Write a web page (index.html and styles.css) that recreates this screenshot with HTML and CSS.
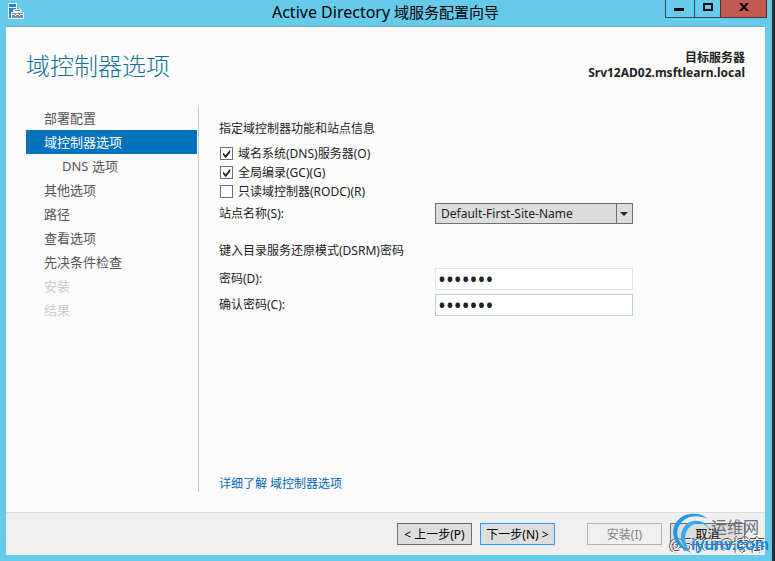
FILE: index.html
```html
<!DOCTYPE html>
<html lang="zh-CN">
<head>
  <meta charset="UTF-8" />
  <title>Active Directory 域服务配置向导</title>
  <link rel="stylesheet" href="styles.css">
</head>
<body>
  <div class="window">
    <header class="titlebar">
      <svg class="app-icon" width="16" height="16" viewBox="0 0 16 16">
        <path d="M0 0h9v7H4v9H0z" fill="#fff" />
        <path d="M1 1h7v3H1zM1 5h7v1H6L3 10v5H1z" fill="#1f86dc" />
        <path d="M3 9.500h2.500V7q0-1 1-1h6q1 0 1 1v2.500H16V16H3z" fill="#fff" />
        <path d="M4 10h11v1h-3v1h-1v-1H8v1H7v-1H4zM4 12h3v1h1v-1h3v1h1v-1h3v3H4zM7 7h5v1H7z" fill="#7890a4" />
      </svg>
      <div class="title"><span>Active Directory</span> 域服务配置向导</div>
      <div class="controls">
        <button class="min" aria-label="最小化"><svg width="28" height="17"><path d="M8 8h10v3H8z" /></svg></button>
        <button class="max" aria-label="最大化"><svg width="25" height="17"><path d="M8 3h10v8H8zM10 5v4h6V5z" fill-rule="evenodd" /></svg></button>
        <button class="close" aria-label="关闭"><svg width="45" height="17"><path d="M18 3h3l2 2.500L25 3h3l-3.500 4L28 11h-3l-2-2.500L21 11h-3l3.500-4z" /></svg></button>
      </div>
    </header>

    <div class="panel">
      <div class="header">
        <h1>域控制器选项</h1>
        <div class="target">目标服务器<br>Srv12AD02.msftlearn.local</div>
      </div>

      <div class="content">
        <nav class="steps">
          <a href="#">部署配置</a>
          <a href="#" class="active">域控制器选项</a>
          <a href="#" class="sub">DNS 选项</a>
          <a href="#">其他选项</a>
          <a href="#">路径</a>
          <a href="#">查看选项</a>
          <a href="#">先决条件检查</a>
          <a class="disabled">安装</a>
          <a class="disabled">结果</a>
        </nav>

        <form class="options">
          <p class="caption">指定域控制器功能和站点信息</p>
          <div class="checks">
            <label><input type="checkbox" checked />域名系统(DNS)服务器(O)</label>
            <label><input type="checkbox" checked />全局编录(GC)(G)</label>
            <label><input type="checkbox" />只读域控制器(RODC)(R)</label>
          </div>
          <div class="row">
            <label for="site">站点名称(S):</label>
            <div class="select">
              <select id="site"><option>Default-First-Site-Name</option></select>
            </div>
          </div>

          <p class="caption dsrm">键入目录服务还原模式(DSRM)密码</p>
          <div class="passwords">
            <div class="row">
              <label for="pwd">密码(D):</label>
              <input type="password" id="pwd" value="1234567" />
            </div>
            <div class="row">
              <label for="pwd2">确认密码(C):</label>
              <input type="password" id="pwd2" class="current" value="1234567" />
            </div>
          </div>

          <a href="#" class="more">详细了解 域控制器选项</a>
        </form>
      </div>

      <footer class="footer">
        <div class="group">
          <button>&lt; 上一步(P)</button>
          <button class="default">下一步(N) &gt;</button>
        </div>
        <div class="group">
          <button disabled>安装(I)</button>
          <button>取消</button>
        </div>
      </footer>
    </div>
  </div>

  <div class="watermark">
    <span class="cto">@51CTO博客</span>
    <svg width="44" height="42" viewBox="0 0 44 42">
      <path d="M36 6C28-1 14-1 6 7-3 17 0 34 20 40 8 33 1 22 8 11 14 3 25 1 36 6z" fill="#1b9be8" />
      <path d="M37 15C32 6 18 5 12 14c-6 9-3 20 6 25-5-8-7-16-2-23 5-7 14-8 21-1z" fill="#38a8ee" />
    </svg>
    <span class="name">运维网</span>
    <span class="site">iyunv.com</span>
  </div>
</body>
</html>
```
FILE: styles.css
```css
* {
  box-sizing: border-box;
}

body {
  margin: 0;
  padding-right: 3px;
  background: #2d2d2d;
  color: #222;
  font-family: "Noto Sans", "Noto Sans CJK SC", sans-serif;
  font-size: 12px;
  line-height: 20px;
}

button, input, select {
  font: inherit;
  color: inherit;
  margin: 0;
}

a {
  color: inherit;
  text-decoration: none;
}

.window {
  display: flex;
  flex-direction: column;
  min-height: 100vh;
  padding: 0 7px 6px 6px;
  background: #66caea;
}

/* title bar */
.titlebar {
  display: grid;
  grid-template-columns: 1fr auto 1fr;
  height: 26px;
}

.app-icon {
  margin: 3px 2px;
}

.title {
  color: #000;
  font-size: 15px;
  line-height: 24px;
}

.title span {
  font-size: 16px;
}

.controls {
  display: flex;
  justify-self: end;
  height: 18px;
  margin-right: -2px;
}

.controls button {
  display: flex;
  padding: 0;
  border: 1px solid #2c4a58;
  border-width: 0 0 1px 1px;
  background: none;
}

.controls .close {
  border-right-width: 1px;
  border-color: #5d2c28;
  background: #c45b51;
}

/* panel */
.panel {
  flex: 1;
  display: flex;
  flex-direction: column;
  border-top: 1px solid #6fa9c4;
  background: #fcfcfc;
}

.header {
  display: flex;
  justify-content: space-between;
  height: 79px;
  padding: 20px 20px 0;
}

h1 {
  margin: 0;
  color: #0f6f94;
  font-size: 24px;
  font-weight: 300;
  line-height: 38px;
}

.target {
  padding-top: 3px;
  font-weight: bold;
  line-height: 15px;
  text-align: right;
}

.content {
  flex: 1;
  display: flex;
  margin-bottom: 20px;
  padding: 0 20px;
}

.steps {
  width: 173px;
  padding-right: 1px;
  border-right: 1px solid #c8c8c8;
  color: #555;
  font-size: 13px;
  line-height: 24px;
}

.steps a {
  display: block;
  padding-left: 18px;
}

.steps .active {
  background: #0072bc;
  color: #fff;
}

.steps .sub {
  padding-left: 36px;
}

.steps .disabled {
  color: #ccc;
}

.options {
  flex: 1;
  display: flex;
  flex-direction: column;
  padding: 13px 0 0 20px;
}

.caption {
  margin: 0;
}

.checks {
  margin: 5px 0 2px;
}

.checks label {
  display: flex;
  align-items: center;
  gap: 5px;
  height: 19px;
  padding-left: 1px;
}

input[type="checkbox"] {
  appearance: none;
  width: 13px;
  height: 13px;
  border: 1px solid #707070;
  background: #fff;
}

input[type="checkbox"]:checked::before {
  content: "";
  display: block;
  height: 11px;
  background: #222;
  clip-path: polygon(18% 42%, 42% 66%, 84% 14%, 84% 40%, 46% 88%, 38% 88%, 18% 62%);
}

.row {
  display: grid;
  grid-template-columns: 216px 198px;
  align-items: center;
}

.select {
  position: relative;
}

.select select {
  display: block;
  appearance: none;
  width: 100%;
  height: 21px;
  padding: 0 20px 0 5px;
  border: 1px solid #707070;
  border-radius: 0;
  background: #ddd;
  line-height: 19px;
}

.select::before {
  content: "";
  position: absolute;
  top: 0;
  bottom: 0;
  right: 16px;
  border-left: 1px solid #707070;
}

.select::after {
  content: "";
  position: absolute;
  top: 9px;
  right: 5px;
  border: 4px solid transparent;
  border-top-color: #222;
  border-bottom: 0;
  pointer-events: none;
}

.dsrm {
  margin: 17px 0 7px;
}

.passwords {
  display: grid;
  gap: 4px;
}

.passwords input {
  height: 22px;
  padding: 0 2px;
  border: 1px solid #e0e2ec;
  background: #fff;
  font-size: 21px;
  line-height: 20px;
}

.passwords .current {
  border-color: #b4d0e4;
}

.more {
  margin: auto 0 -2px;
  color: #0068b4;
}

/* bottom buttons */
.footer {
  display: flex;
  justify-content: flex-end;
  gap: 32px;
  height: 43px;
  padding: 10px 20px 0;
  border-top: 1px solid #dadada;
  background: #efefef;
}

.group {
  display: flex;
  gap: 8px;
}

.footer button {
  width: 75px;
  height: 22px;
  padding: 1px 0 0;
  border: 1px solid #707070;
  background: #ddd;
  color: #000;
  line-height: 20px;
  white-space: nowrap;
}

.footer .default {
  border-color: #3399ff;
}

.footer button:disabled {
  border-color: #adb2b5;
  background: #efefef;
  color: #838383;
}

/* site watermark */
.watermark {
  position: absolute;
  right: 5px;
  bottom: 5px;
  width: 102px;
  height: 43px;
  pointer-events: none;
}

.watermark > * {
  position: absolute;
  line-height: 18px;
  white-space: nowrap;
}

.watermark svg {
  left: 4px;
  bottom: 1px;
}

.watermark .name {
  top: 5px;
  right: 11px;
  color: #6a6f78;
  font-size: 16px;
}

.watermark .cto {
  right: 5px;
  bottom: 2px;
  color: #fff;
  font-size: 16px;
  text-shadow: -1px 0 #444, 0 -1px #444;
}

.watermark .site {
  right: 1px;
  bottom: 2px;
  color: #1c86e0;
  font-family: "Liberation Sans", sans-serif;
  font-size: 16px;
  font-weight: bold;
}
```
